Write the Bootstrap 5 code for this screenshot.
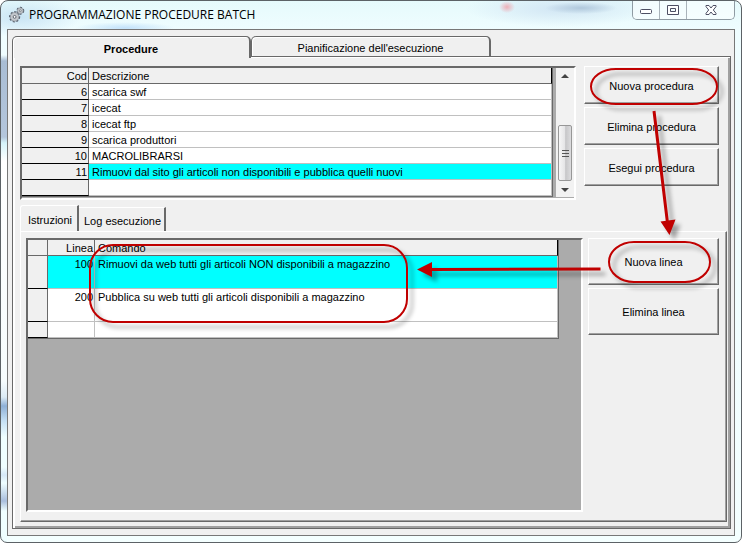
<!DOCTYPE html>
<html lang="it">
<head>
<meta charset="utf-8">
<meta name="viewport" content="width=device-width, initial-scale=1">
<title>Programmazione procedure batch</title>
<link rel="stylesheet" href="https://cdn.jsdelivr.net/npm/bootstrap@5.3.0/dist/css/bootstrap.min.css">
<style>
:root{--face:#f0f0f0;--dark:#696969;--mid:#a0a0a0}
body{font:11px/14px "Liberation Sans",Arial,sans-serif;color:#000;background:#fff}
button{color:#000}
.window{min-height:100vh;border:1px solid #5c6266;border-radius:8px 8px 7px 7px;padding:0 6px 6px;
 background:
  linear-gradient(180deg,transparent 54px,#a9bdd4 60px,#b4c6dc 136px,#d5f3fa 142px,#fff 160px,#f6fcfd 380px,#dcebf5 396px,#8fb0d6 405px,#c5e0f5 420px,#effeff 436px,#effeff 466px,#d6e8f8 474px,#effeff 482px,#a9bedd 500px,#effeff 510px,#effeff 100%) 0 0/6px 100% no-repeat,
  radial-gradient(ellipse 8px 6px at 506px 6px,#eeb0b8 0,transparent 100%),
  radial-gradient(ellipse 36px 6px at 580px 7px,#b0c8dc 0,transparent 100%),
  radial-gradient(ellipse 95px 18px at 560px 8px,#d2e6f4 0,transparent 100%),
  radial-gradient(ellipse 50px 6px at 124px 27px,#c3e2fa 0,transparent 100%),
  radial-gradient(ellipse 60px 20px at 20px 16px,#c9e4f4 0,transparent 100%),
  linear-gradient(180deg,#e6fafc 0,#effdff 30px,#f4ffff 100%)}
.titlebar{height:28px}
.caption-row{gap:4px;padding:4px 0 0 1px}
.caption-text{font:12px/16px "Open Sans","Noto Sans",sans-serif}
.winbtns{height:19px;border:1px solid #8f9ba3;border-top:0;border-radius:0 0 5px 5px}
.winbtns button{border:0;border-right:1px solid #a9b3ba;background:rgba(255,255,255,.5);padding:0;width:27px}
.winbtns button:last-child{border-right:0;width:47px}
.client{background:var(--face);border:1px solid #777;padding:6px 3px 6px 4px}
.toptabs{height:20px}
.toptab{width:240px;height:20px;border:1px solid var(--dark);border-right-width:2px;border-bottom:0;border-radius:5px 5px 0 0;background:var(--face);padding:2px 0 0;box-shadow:inset 1px 1px #fff}
.toptab.current{height:22px;width:239px;z-index:1;font-weight:bold}
.toppage{border:1px solid var(--dark);padding:9px 3px 6px 7px;box-shadow:inset 2px 1px #fff,inset -2px -2px var(--mid)}
.sunken{border:2px solid;border-color:var(--dark) #fff #fff var(--dark);background:#ababab}
.grid{table-layout:fixed;border-collapse:separate;border-spacing:0;width:100%;background:#fff;border-bottom:1px solid var(--dark);border-right:1px solid var(--dark)}
.grid th,.grid td{padding:1px 3px 0;height:16px;font-weight:400;border-right:1px solid #c0c0c0;border-bottom:1px solid #c0c0c0;vertical-align:top;white-space:nowrap;overflow:hidden}
.grid thead th,.grid tbody th{background:var(--face);border-color:var(--dark)}
.grid tbody th{border-bottom-color:#000}
.grid thead th:last-child{border-right-color:#000}
.grid .num{text-align:right;padding:1px 1px 0}
.grid .picked td{background:#0ff}
.grid .tall>*{height:33px}
.col-cod{width:67px}.col-sel{width:20px}.col-lin{width:47px}
.list-pane{padding-bottom:1px;gap:3px}
.scroller{flex:0 0 18px;background:#f2f2f2;padding:0 2px}
.scroller button{border:0;background:none;padding:0;height:16px;line-height:0}
.thumb{height:56px;border:1px solid #979797;border-radius:2px;background:linear-gradient(90deg,#f6f6f6,#e4e4e6 50%,#c6c6c8 55%,#dcdcde)}
.cmd{border:1px solid;border-color:#fff var(--dark) var(--dark) #fff;border-radius:0;background:var(--face);box-shadow:inset -1px -1px var(--mid);padding:1px 0 0;width:135px;height:38px}
.cmd-line{width:131px;height:47px}
.cmd-stack{gap:3px}
.subtabs{margin-top:5px;height:26px}
.subtab{border:0;border-top:1px solid #fff;border-right:2px solid var(--dark);background:var(--face);padding:3px 0 0 2px;height:24px;width:87px}
.subtab.current{border-left:1px solid #fff;border-radius:3px 0 0 0;height:26px;width:59px}
.subpage{border:1px solid;border-color:#fff var(--dark) var(--dark) #fff;box-shadow:inset -1px -1px var(--mid);padding:6px 7px 9px 5px;column-gap:5px}
.lines-pane{padding-right:22px}
.upper{padding-right:8px}
.notes{top:0;left:0;pointer-events:none;filter:drop-shadow(5px 5px 2px rgba(0,0,0,.35))}
</style>
</head>
<body>
<div class="window d-flex flex-column position-relative">
  <header class="titlebar d-flex align-items-start">
    <div class="caption-row d-flex align-items-center flex-fill">
      <svg width="17" height="19" viewBox="0 0 18 18" aria-hidden="true">
        <g fill="none" stroke="#4b5563" stroke-dasharray="2 1.6">
          <circle cx="7" cy="11.500" r="4.800" stroke-width="2.200"/>
          <circle cx="13" cy="5" r="3.200" stroke-width="2"/>
        </g>
        <g fill="#c3c7cc" stroke="#8d949c" stroke-width=".8">
          <circle cx="7" cy="11.500" r="4.600"/><circle cx="13" cy="5" r="3.100"/>
        </g>
        <circle cx="7" cy="11.500" r="1.500" fill="#fff" stroke="#59616b"/>
        <circle cx="13" cy="5" r="1" fill="#fff" stroke="#59616b" stroke-width=".7"/>
      </svg>
      <span class="caption-text">PROGRAMMAZIONE PROCEDURE BATCH</span>
    </div>
    <div class="winbtns d-flex overflow-hidden">
      <button type="button" aria-label="Riduci a icona"><svg class="d-block mx-auto" width="14" height="12"><rect x="1.500" y="5.500" width="11" height="4" rx="1" fill="#fff" stroke="#4d4f63"/></svg></button>
      <button type="button" aria-label="Ingrandisci"><svg class="d-block mx-auto" width="14" height="12"><path d="M1.500 1.500h11v9h-11zM4.500 4.500h5v3h-5z" fill="#fff" stroke="#4d4f63" fill-rule="evenodd"/></svg></button>
      <button type="button" aria-label="Chiudi"><svg class="d-block mx-auto" width="14" height="12"><path d="M2 1.500h3L7 4l2-2.500h3v1.200L9.300 6l2.700 3.300v1.200H9L7 8l-2 2.500H2V9.300L4.700 6 2 2.700z" fill="#fff" stroke="#4d4f63"/></svg></button>
    </div>
  </header>

  <main class="client flex-fill d-flex flex-column">
    <nav class="toptabs d-flex align-items-start">
      <button type="button" class="toptab current position-relative">Procedure</button>
      <button type="button" class="toptab">Pianificazione dell'esecuzione</button>
    </nav>
    <section class="toppage flex-fill d-flex flex-column">
      <div class="upper d-flex gap-2">
        <div class="sunken list-pane d-flex flex-fill">
          <div class="flex-fill">
            <table class="grid">
              <colgroup><col class="col-cod"><col></colgroup>
              <thead><tr><th class="num">Cod</th><th>Descrizione</th></tr></thead>
              <tbody>
                <tr><th class="num">6</th><td>scarica swf</td></tr>
                <tr><th class="num">7</th><td>icecat</td></tr>
                <tr><th class="num">8</th><td>icecat ftp</td></tr>
                <tr><th class="num">9</th><td>scarica produttori</td></tr>
                <tr><th class="num">10</th><td>MACROLIBRARSI</td></tr>
                <tr class="picked"><th class="num">11</th><td>Rimuovi dal sito gli articoli non disponibili e pubblica quelli nuovi</td></tr>
                <tr><th class="num"></th><td></td></tr>
              </tbody>
            </table>
          </div>
          <div class="scroller d-flex flex-column">
            <button type="button" aria-label="Scorri su"><svg width="8" height="5"><path d="M4 0l4 4H0z" fill="#444"/></svg></button>
            <div class="flex-fill"></div>
            <div class="thumb d-flex align-items-center justify-content-center"><svg width="7" height="9"><path d="M0 1.500h7M0 4.500h7M0 7.500h7" stroke="#555"/></svg></div>
            <button type="button" aria-label="Scorri giù"><svg width="8" height="5"><path d="M4 5l4-4H0z" fill="#444"/></svg></button>
          </div>
        </div>
        <div class="cmd-stack d-flex flex-column">
          <button type="button" class="cmd">Nuova procedura</button>
          <button type="button" class="cmd">Elimina procedura</button>
          <button type="button" class="cmd">Esegui procedura</button>
        </div>
      </div>

      <nav class="subtabs d-flex align-items-end">
        <button type="button" class="subtab current">Istruzioni</button>
        <button type="button" class="subtab">Log esecuzione</button>
      </nav>
      <div class="subpage flex-fill d-flex">
        <div class="sunken lines-pane flex-fill">
          <table class="grid">
            <colgroup><col class="col-sel"><col class="col-lin"><col></colgroup>
            <thead><tr><th></th><th class="num">Linea</th><th>Comando</th></tr></thead>
            <tbody>
              <tr class="tall picked"><th></th><td class="num">100</td><td>Rimuovi da web tutti gli articoli NON disponibili a magazzino</td></tr>
              <tr class="tall"><th></th><td class="num">200</td><td>Pubblica su web tutti gli articoli disponibili a magazzino</td></tr>
              <tr><th></th><td></td><td></td></tr>
            </tbody>
          </table>
        </div>
        <div class="cmd-stack d-flex flex-column">
          <button type="button" class="cmd cmd-line">Nuova linea</button>
          <button type="button" class="cmd cmd-line">Elimina linea</button>
        </div>
      </div>
    </section>
  </main>

  <svg class="notes position-absolute" width="740" height="400" viewBox="1 1 740 400" aria-hidden="true">
    <g fill="none" stroke="#c00000" stroke-width="2">
      <rect x="591" y="69" width="126" height="35" rx="25" ry="17.500"/>
      <rect x="609" y="242" width="101" height="40" rx="25" ry="20"/>
      <rect x="90" y="245" width="317" height="77" rx="23"/>
    </g>
    <path d="M654 111l13.500 112M600.500 269L430 269.500" stroke="#c00000" stroke-width="3"/>
    <path d="M660.500 221.500l15-2-6 15.500zM417 269.500l15-7.500v15z" fill="#c00000"/>
  </svg>
</div>
<script src="https://cdn.jsdelivr.net/npm/bootstrap@5.3.0/dist/js/bootstrap.bundle.min.js"></script>
</body>
</html>
